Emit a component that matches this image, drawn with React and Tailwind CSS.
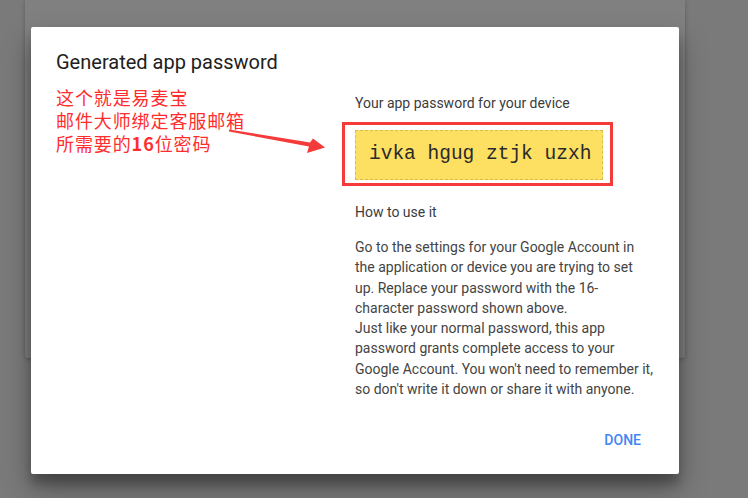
import React from "react";

const steps = [
  "Go to the settings for your Google Account in",
  "the application or device you are trying to set",
  "up. Replace your password with the 16-",
  "character password shown above.",
  "Just like your normal password, this app",
  "password grants complete access to your",
  "Google Account. You won't need to remember it,",
  "so don't write it down or share it with anyone.",
];

const Arrow = () => (
  <svg className="absolute left-0 top-0 pointer-events-none" width="748" height="498">
    <polygon
      points="229,129.5 310,142.5 313,138.5 325,147.5 307,153 309,146.5 229,131.5"
      fill="#f53a3a"
    />
  </svg>
);

export default function App() {
  return (
    <div
      className="relative w-[748px] h-[498px] overflow-hidden bg-[#7a7a7a]"
      style={{ fontFamily: "Roboto, 'Noto Sans', sans-serif" }}
    >
      {/* page behind the overlay */}
      <div className="ml-[25px] w-[660px] h-[358px] bg-[#808080] rounded-b-[3px] shadow-[0_1px_4px_rgba(0,0,0,0.25)]" />

      {/* dialog */}
      <div className="absolute left-[31px] top-[27px] w-[648px] bg-white rounded-[2px] shadow-[0_14px_28px_rgba(0,0,0,0.35),0_10px_10px_rgba(0,0,0,0.2)]">
        <div className="pt-[23px] pl-[25px]">
          <h2 className="text-[20px] leading-[24px] text-[#212121]">Generated app password</h2>
        </div>

        <div className="flex items-start pl-[25px]">
          {/* annotation */}
          <div
            className="w-[299px] mt-[12px] text-[18px] tracking-[0.9px] leading-[23px] text-[#ff2d2d]"
            style={{ fontFamily: "'Noto Sans CJK SC', 'Noto Sans', sans-serif" }}
          >
            <p className="h-[23px]">这个就是易麦宝</p>
            <p className="h-[23px]">邮件大师绑定客服邮箱</p>
            <p className="h-[23px]">
              所需要的<span className="font-bold">16</span>位密码
            </p>
          </div>

          {/* details */}
          <div className="w-[300px] mt-[19px] text-[14px] text-[#3c3c3c]">
            <p className="leading-[20px]">Your app password for your device</p>

            <div className="relative mt-[17px] w-[248px]">
              <div className="h-[50px] flex items-center pl-[13px] bg-[#fddf62] border border-dashed border-[#d9bd4c]">
                <span
                  className="text-[19.5px] text-[#2a2a2a] whitespace-nowrap"
                  style={{ fontFamily: "'Liberation Mono', monospace" }}
                >
                  ivka hgug ztjk uzxh
                </span>
              </div>
              <div className="absolute left-[-13px] top-[-8px] w-[271px] h-[64px] border-[3px] border-[#f53a3a] pointer-events-none" />
            </div>

            <p className="mt-[22px] leading-[20px]">How to use it</p>

            <div className="mt-[15px] leading-[20.3px] text-[#444]">
              {steps.map((l) => (
                <p key={l} className="whitespace-nowrap">
                  {l}
                </p>
              ))}
            </div>
          </div>
        </div>

        <div className="flex justify-end pr-[30px] pt-[23px] pb-[16px]">
          <button className="h-[36px] px-[8px] text-[14px] font-medium text-[#4285f4]">DONE</button>
        </div>
      </div>

      <Arrow />
    </div>
  );
}
